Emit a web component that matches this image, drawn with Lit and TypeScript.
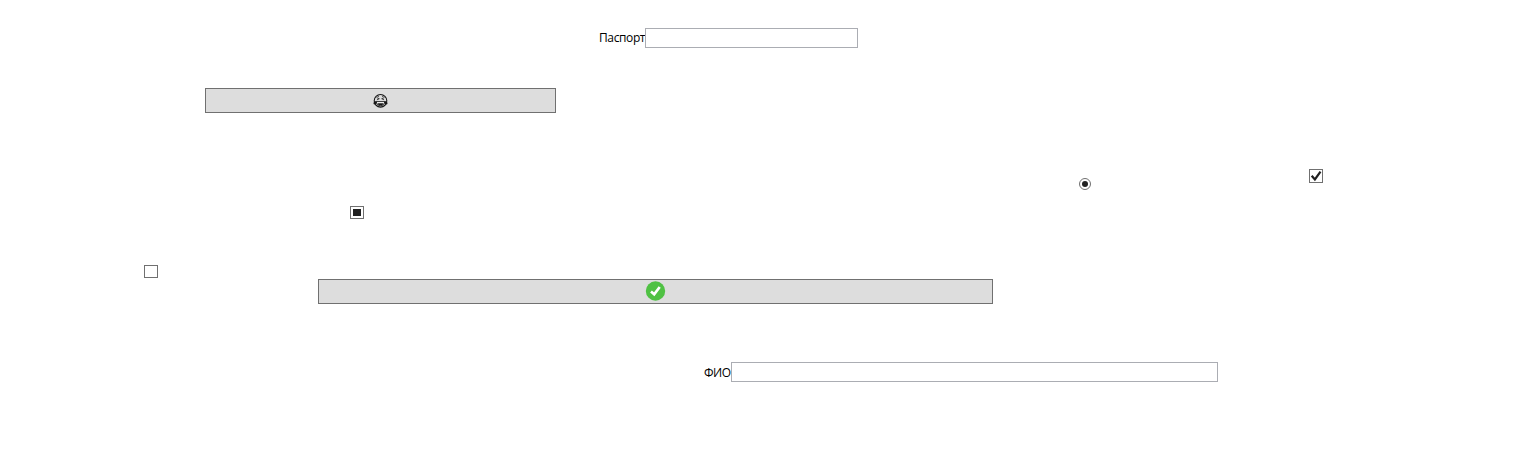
import { LitElement, html, css, svg } from "lit";
import { customElement } from "lit/decorators.js";

@customElement("labeled-field")
class LabeledField extends LitElement {
  static properties = { label: {} };
  declare label: string;
  static styles = css`
    :host { display: flex; height: 20px; }
    label { display: flex; flex: 1; }
    .caption {
      flex: none;
      width: var(--caption-width);
      font: 12px/var(--caption-line, 20px) "Open Sans", "Noto Sans", sans-serif;
      letter-spacing: var(--caption-spacing, 0);
      white-space: nowrap;
      color: #000;
    }
    input {
      flex: 1;
      min-width: 0;
      box-sizing: border-box;
      height: 20px;
      margin: 0;
      padding: 0 3px;
      border: 1px solid #abadb3;
      border-radius: 0;
      background: #fff;
      outline: none;
      font: 12px "Open Sans", sans-serif;
    }
  `;
  render() {
    return html`<label><span class="caption">${this.label}</span><input type="text" /></label>`;
  }
}

const face = svg`
  <svg width="15" height="16" viewBox="0 0 15 16" fill="none" stroke="#161616">
    <circle cx="7.500" cy="7.800" r="6.300" stroke-width="1.100"/>
    <path d="M3.600 4.600 6.300 5.700 3.900 6.900M11.400 4.600 8.700 5.700 11.100 6.900M4.500 3.300h1.500M9 3.300h1.500" stroke-width=".8"/>
    <path d="M3.300 8.600h8.400c0 2.500-1.700 4.200-4.200 4.200s-4.200-1.700-4.200-4.200Z" fill="#fff" stroke-width=".9"/>
    <path d="M4.300 10.300h6.400Q9.800 12.600 7.500 12.600T4.300 10.300Z" fill="#161616" stroke="none"/>
    <path d="M3.600 8.100C1.500 8.100.4 9.200.5 10.400c.1 1.200 2 1.500 2.700.4.300-.6.400-1.700.4-2.700ZM11.400 8.100c2.100 0 3.200 1.100 3.100 2.300-.1 1.200-2 1.500-2.700.4-.3-.6-.4-1.700-.4-2.700Z" fill="#161616" stroke="none"/>
  </svg>`;

const success = svg`
  <svg width="19" height="21" viewBox="0 0 19 21">
    <circle cx="9.500" cy="10" r="9.700" fill="#4fc143"/>
    <path d="M5 10.500 8.200 13.300 13.700 6" fill="none" stroke="#fff" stroke-width="2.700"/>
  </svg>`;

@customElement("app-root")
class AppRoot extends LitElement {
  static styles = css`
    :host {
      display: flex;
      flex-direction: column;
      align-items: flex-start;
      box-sizing: border-box;
      width: 1525px;
      height: 461px;
      padding-top: 28px;
      background: #fff;
      overflow: hidden;
    }
    button, .box, .radio { box-sizing: border-box; margin: 0; padding: 0; flex: none; }
    svg { display: block; overflow: visible; }
    button {
      display: flex;
      align-items: center;
      justify-content: center;
      height: 25px;
      border: 1px solid #707070;
      border-radius: 0;
      background: #ddd;
    }
    .box {
      display: grid;
      place-items: center;
      width: 14px;
      height: 13px;
      border: 1px solid #707070;
      background: #fff;
    }
    .passport { width: 259px; margin-left: 599px; --caption-width: 46px; --caption-spacing: -0.38px; }
    .face { width: 351px; margin: 40px 0 0 205px; }
    .choices { display: flex; align-items: flex-start; margin: 56px 0 0 1079px; height: 21px; }
    .radio { display: block; width: 12px; height: 12px; margin: 9px 218px 0 0; }
    .checked { height: 14px; }
    .mixed { margin: 16px 0 0 350px; }
    .fill { width: 8px; height: 7px; background: #212121; }
    .empty { margin: 46px 0 0 144px; }
    .success { width: 675px; margin: 1px 0 0 318px; align-items: flex-start; padding-top: 1px; }
    .fullname {
      width: 514px;
      margin: 58px 0 0 704px;
      --caption-width: 27px;
      --caption-spacing: -0.45px;
      --caption-line: 22px;
    }
  `;
  render() {
    return html`
      <labeled-field class="passport" label="Паспорт"></labeled-field>
      <button class="face">${face}</button>
      <div class="choices">
        <span class="radio" role="radio" aria-checked="true">
          <svg width="12" height="12" viewBox="0 0 12 12">
            <circle cx="6" cy="6" r="5.500" fill="#fff" stroke="#707070"/>
            <circle cx="6" cy="6" r="3" fill="#212121"/>
          </svg>
        </span>
        <span class="box checked" role="checkbox" aria-checked="true">
          <svg width="12" height="12" viewBox="0 0 12 12">
            <path d="M1.700 5.700 4.900 9.500 10.500 1.700" fill="none" stroke="#212121" stroke-width="2.200"/>
          </svg>
        </span>
      </div>
      <span class="box mixed" role="checkbox" aria-checked="mixed"><i class="fill"></i></span>
      <span class="box empty" role="checkbox" aria-checked="false"></span>
      <button class="success">${success}</button>
      <labeled-field class="fullname" label="ФИО"></labeled-field>
    `;
  }
}
